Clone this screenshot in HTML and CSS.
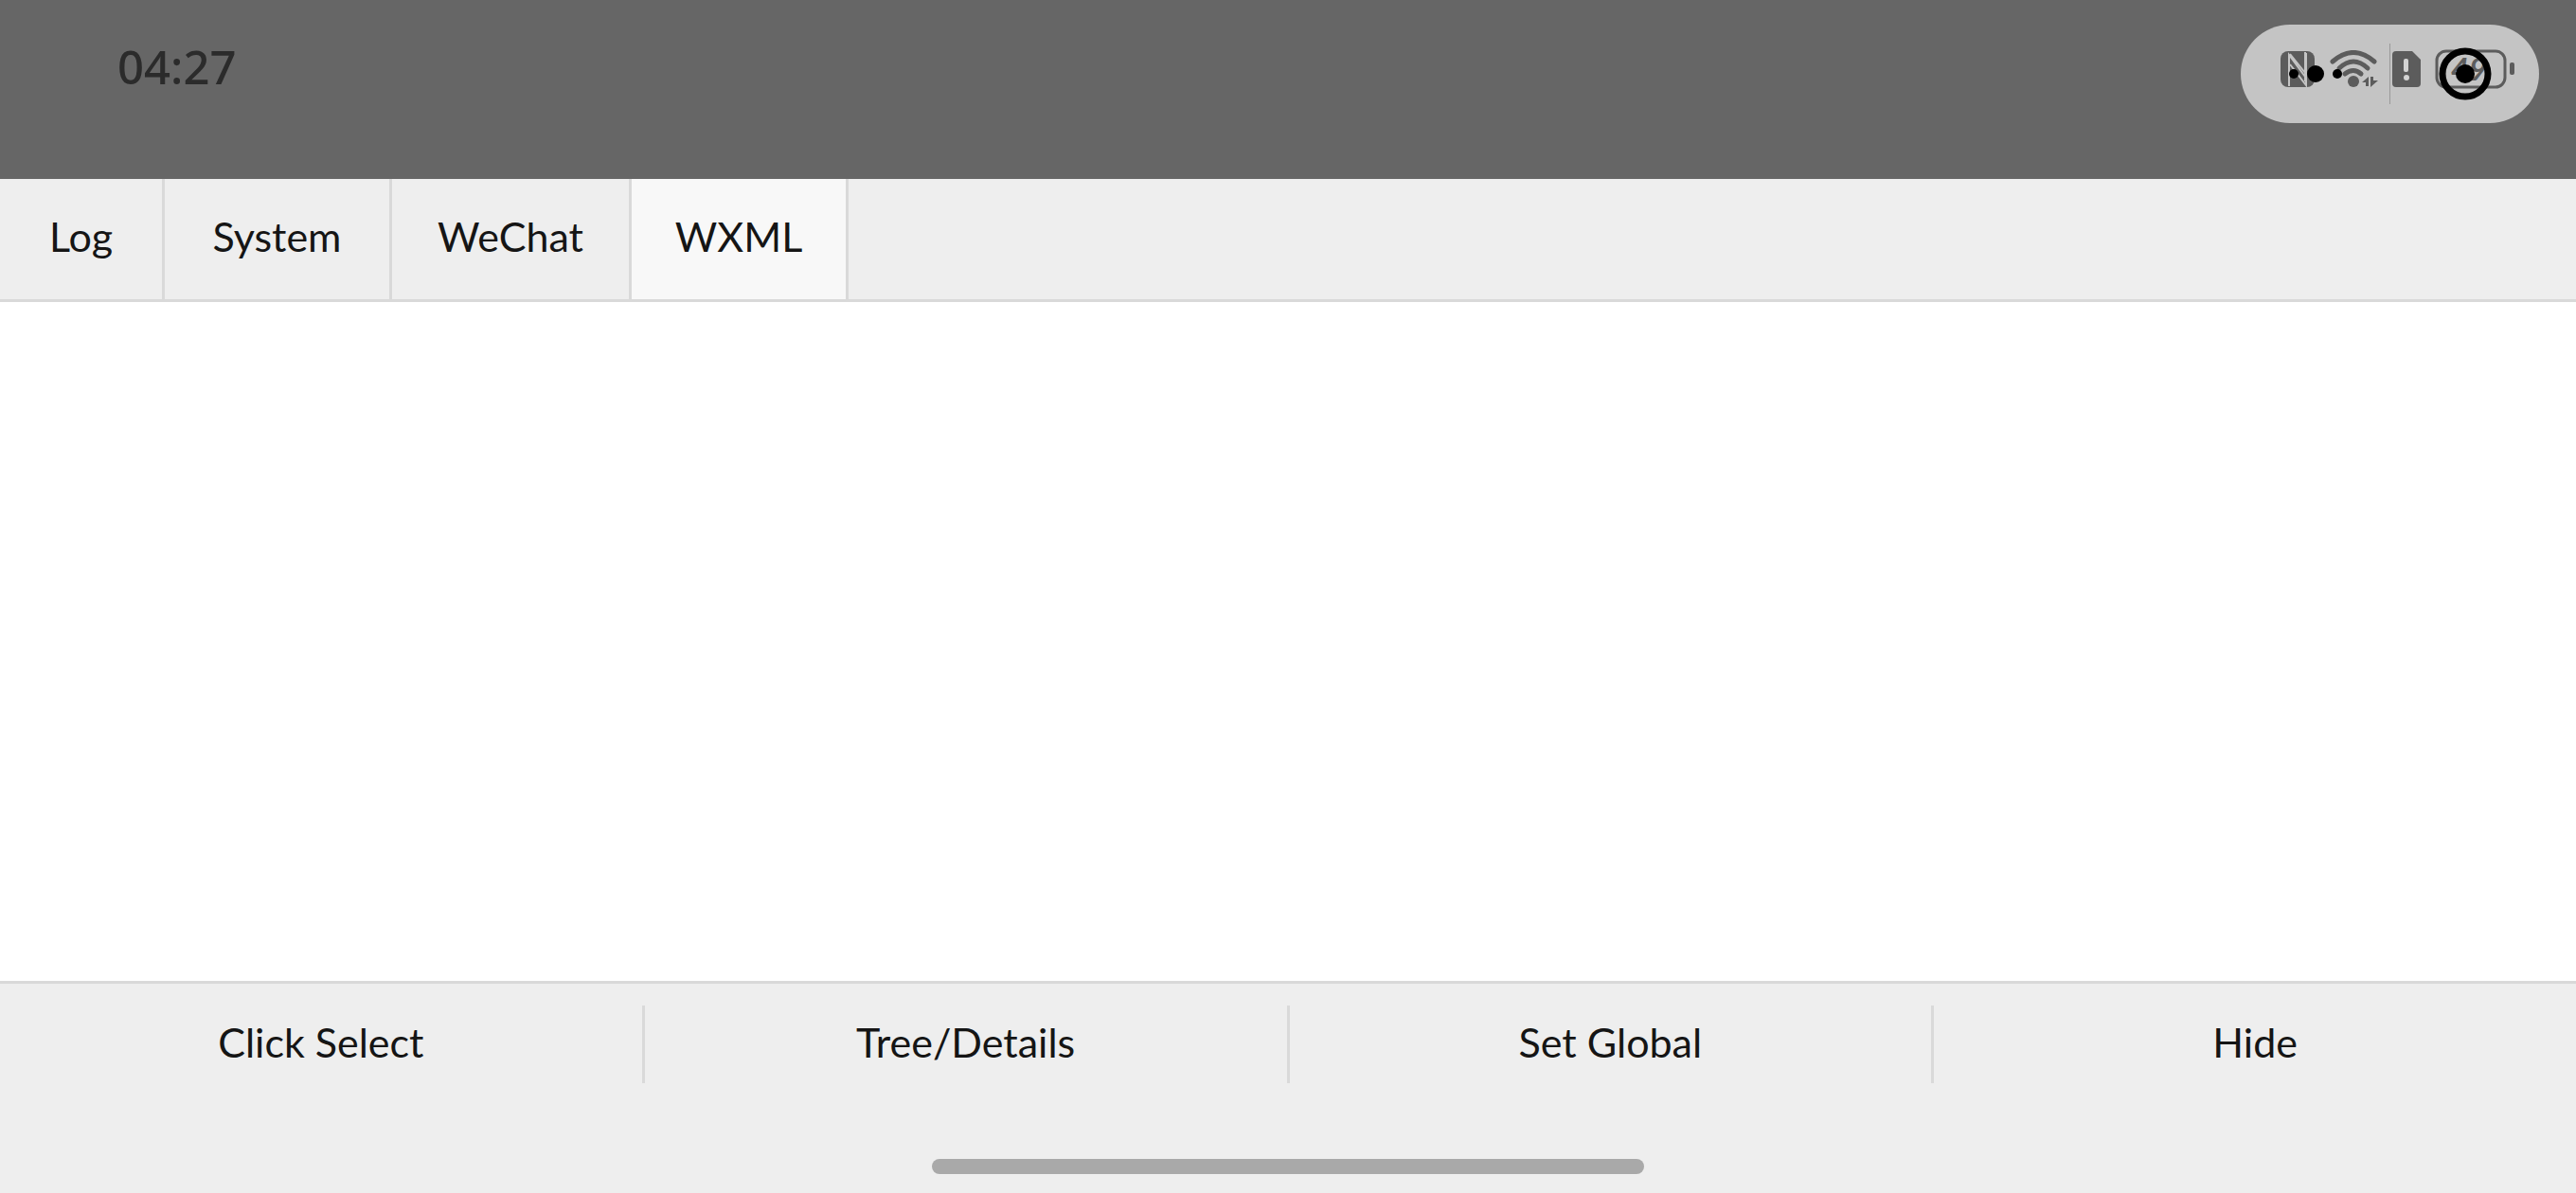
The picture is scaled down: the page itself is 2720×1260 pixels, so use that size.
FILE: index.html
```html
<!DOCTYPE html>
<html lang="en">
<head>
    <meta charset="utf-8">
    <meta name="viewport" content="width=device-width, initial-scale=1.0">
    <title>vConsole</title>
    <link rel="stylesheet" href="styles.css">
</head>

<body>
<header class="statusbar">
    <time class="clock">04:27</time>
    <div class="capsule">
        <!-- system icons, under the capsule buttons -->
        <div class="status-icons">
            <svg width="36" height="38" viewBox="0 0 36 38" aria-label="NFC">
                <rect width="36" height="38" rx="8" fill="#5c5c5c"/>
                <path d="M9 37V4L26 27M10 3L26 23M26 1V32M27 2V36L10 14" fill="none" stroke="#c4c4c4" stroke-width="2"/>
            </svg>
            <svg width="52" height="40" viewBox="0 0 52 40" aria-label="Wi-Fi">
                <g fill="none" stroke="#5c5c5c" stroke-width="5" stroke-linecap="round">
                    <path d="M4 12Q26 -7 48 12"/>
                    <path d="M11 19Q26 5 41 19"/>
                    <path d="M17 25Q26 18 34 25"/>
                </g>
                <circle cx="26" cy="33" r="6" fill="#5c5c5c"/>
                <path d="M42 28V38H39V34H35ZM44 28H47V32H52L44 39Z" fill="#5c5c5c"/>
            </svg>
            <svg class="sim" width="30" height="38" viewBox="0 0 30 38" aria-label="SIM">
                <path d="M4 0H21L30 9V34Q30 38 26 38H4Q0 38 0 34V4Q0 0 4 0Z" fill="#5c5c5c"/>
                <rect x="12" y="8" width="5" height="14" rx="2" fill="#d4d4d4"/>
                <circle cx="15" cy="28" r="3" fill="#d4d4d4"/>
            </svg>
            <svg class="battery" width="84" height="42" viewBox="0 0 84 42" aria-label="Battery">
                <rect x="2" y="2" width="72" height="38" rx="10" fill="none" stroke="#5c5c5c" stroke-width="3"/>
                <rect x="79" y="14" width="5" height="13" rx="2" fill="#5c5c5c"/>
                <text class="battery-text" x="36" y="33">49</text>
            </svg>
        </div>
        <button class="capsule-btn" aria-label="More">
            <svg width="56" height="20" viewBox="0 0 56 20">
                <circle cx="5" cy="10" r="5"/>
                <circle cx="28" cy="10" r="9"/>
                <circle cx="51" cy="10" r="5"/>
            </svg>
        </button>
        <span class="divider"></span>
        <button class="capsule-btn" aria-label="Close">
            <svg width="56" height="56" viewBox="0 0 56 56">
                <circle cx="28" cy="28" r="24" fill="none" stroke="#000" stroke-width="7"/>
                <circle cx="28" cy="28" r="10"/>
            </svg>
        </button>
    </div>
</header>

<nav class="tabs">
    <button class="tab">Log</button>
    <button class="tab">System</button>
    <button class="tab">WeChat</button>
    <button class="tab active">WXML</button>
</nav>

<main class="content"></main>

<footer class="footer">
    <div class="toolbar">
        <button class="tool">Click Select</button>
        <button class="tool">Tree/Details</button>
        <button class="tool">Set Global</button>
        <button class="tool">Hide</button>
    </div>
    <div class="home-bar"></div>
</footer>
</body>
</html>
```
FILE: styles.css
```css
* {
    box-sizing: border-box;
}
body {
    margin: 0;
    min-height: 100vh;
    display: flex;
    flex-direction: column;
    background: #fff;
    color: #151515;
    font-family: Lato, "Liberation Sans", sans-serif;
    font-size: 43px;
}
button {
    margin: 0;
    padding: 0;
    border: none;
    background: none;
    color: inherit;
    font: inherit;
    cursor: pointer;
}

/* status bar */
.statusbar {
    display: flex;
    justify-content: space-between;
    align-items: flex-start;
    height: 189px;
    padding: 26px 39px 0 124px;
    background: #666;
}
.clock {
    padding-top: 14px;
    color: #2b2b2b;
    font-family: "Noto Sans", sans-serif;
    font-size: 49px;
    font-weight: 500;
    line-height: 60px;
}
.capsule {
    position: relative;
    display: flex;
    align-items: center;
    width: 315px;
    height: 104px;
    border-radius: 52px;
    background: #c4c4c4;
}
.capsule-btn {
    position: relative;
    flex: 1;
    height: 100%;
    display: flex;
    align-items: center;
    justify-content: center;
}
.divider {
    width: 1px;
    height: 64px;
    background: #999;
}
.status-icons {
    position: absolute;
    top: 26px;
    left: 42px;
    display: flex;
    align-items: center;
    gap: 15px;
}
.battery {
    overflow: visible;
}
.battery-text {
    fill: #5c5c5c;
    font-size: 33px;
    font-style: italic;
    font-weight: 700;
    text-anchor: middle;
}

/* tabs */
.tabs {
    display: grid;
    grid-template-columns: 174px 240px 253px 229px;
    height: 130px;
    border-bottom: 3px solid #d9d9d9;
    background: #eee;
}
.tab {
    padding-bottom: 6px;
    border-right: 3px solid #d9d9d9;
}
.tab.active {
    background: #f8f8f8;
}

.content {
    flex: 1;
}

/* bottom toolbar */
.footer {
    display: flex;
    flex-direction: column;
    align-items: center;
    padding-bottom: 20px;
    border-top: 3px solid #d9d9d9;
    background: #eee;
}
.toolbar {
    display: flex;
    width: 100%;
    padding: 23px 0;
}
.tool {
    flex: 1;
    height: 82px;
    padding-bottom: 6px;
    border-right: 3px solid #d9d9d9;
}
.tool:last-child {
    border-right: none;
}
.home-bar {
    width: 752px;
    height: 16px;
    margin-top: 57px;
    border-radius: 8px;
    background: #a9a9a9;
}
```
